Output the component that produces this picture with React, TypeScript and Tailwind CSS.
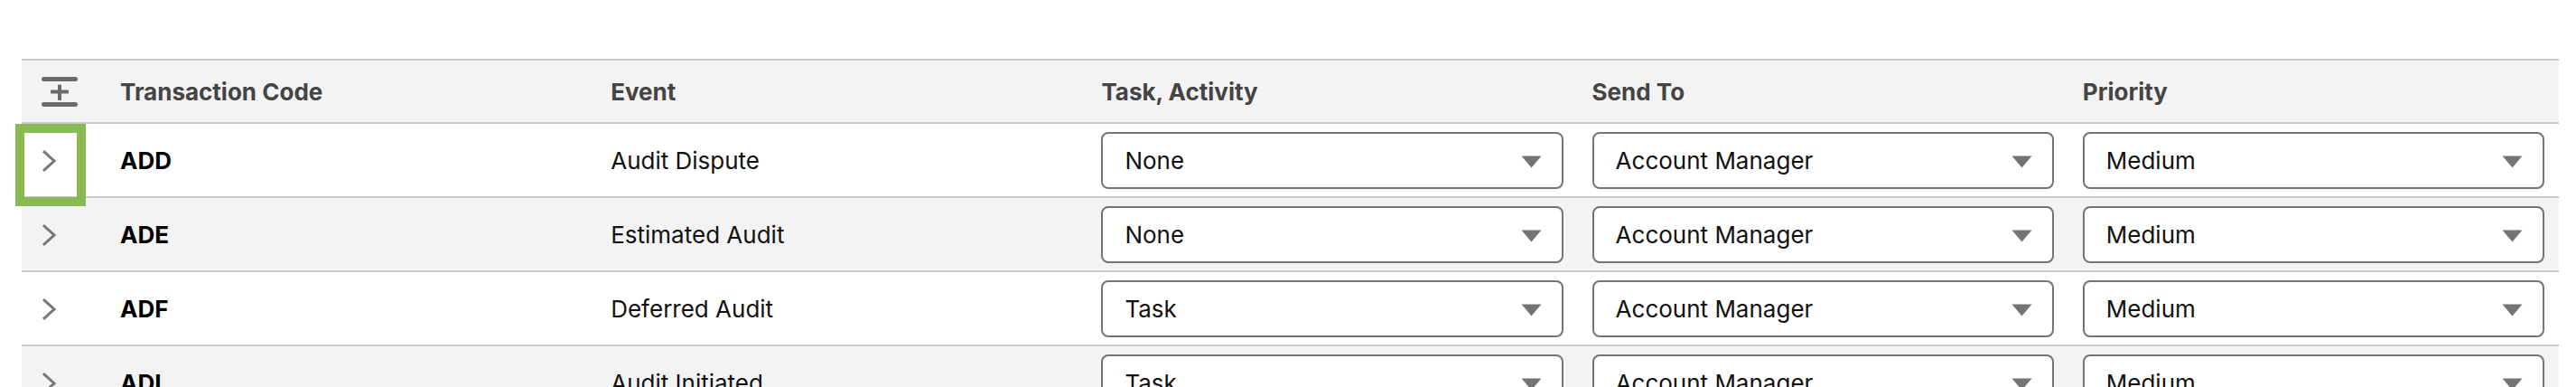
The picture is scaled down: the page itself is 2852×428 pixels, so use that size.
import React from "react";

interface Rule {
  code: string;
  event: string;
  task: string;
  sendTo: string;
  priority: string;
}

const rules: Rule[] = [
  { code: "ADD", event: "Audit Dispute", task: "None", sendTo: "Account Manager", priority: "Medium" },
  { code: "ADE", event: "Estimated Audit", task: "None", sendTo: "Account Manager", priority: "Medium" },
  { code: "ADF", event: "Deferred Audit", task: "Task", sendTo: "Account Manager", priority: "Medium" },
  { code: "ADI", event: "Audit Initiated", task: "Task", sendTo: "Account Manager", priority: "Medium" },
];

// header icon: expand all rows
function ExpandAllIcon() {
  return (
    <svg width="40" height="34" viewBox="0 0 40 34" fill="#6b6b6b">
      <rect x="0" y="0" width="40" height="5" rx="2.5" />
      <rect x="0" y="28" width="40" height="5" rx="2.5" />
      <rect x="10" y="14.5" width="20" height="4" rx="1" />
      <rect x="18" y="8.5" width="4" height="17.5" rx="1" />
    </svg>
  );
}

function Chevron() {
  return (
    <svg width="16" height="24" viewBox="0 0 16 24" fill="none">
      <polyline points="2,1.2 14,12 2,22.8" stroke="#777777" strokeWidth="3" />
    </svg>
  );
}

function Picklist({ value }: { value: string }) {
  return (
    <div className="flex items-center justify-between h-[63px] w-full bg-white border-2 border-[#747474] rounded-[8px] pl-[24px] pr-[22px]">
      <span className="text-[26px] text-[#111111]">{value}</span>
      <svg width="23" height="14" viewBox="0 0 23 14" className="mt-[3px]">
        <polygon points="0.5,0.5 22.5,0.5 11.5,13.5" fill="#747474" />
      </svg>
    </div>
  );
}

export default function App() {
  return (
    <div className="w-full h-[428px] overflow-hidden bg-white pt-[65px] pl-[24px] pr-[19px] font-[Inter,'Noto_Sans',sans-serif]">
      <div className="border-t-2 border-[#c9c9c9]">
        {/* header */}
        <div className="grid grid-cols-[93px_repeat(5,1fr)] h-[70px] bg-[#f3f3f3] border-b-2 border-[#c9c9c9] text-[26px] font-bold text-[#444444]">
          <div className="flex items-center pl-[22px] pt-[2px]">
            <ExpandAllIcon />
          </div>
          <div className="flex items-center px-[16px]">Transaction Code</div>
          <div className="flex items-center px-[16px]">Event</div>
          <div className="flex items-center px-[16px]">Task, Activity</div>
          <div className="flex items-center px-[16px]">Send To</div>
          <div className="flex items-center px-[16px]">Priority</div>
        </div>

        {rules.map((r, i) => (
          <div
            key={r.code}
            className={`grid grid-cols-[93px_repeat(5,1fr)] h-[82px] border-b-2 border-[#c9c9c9] text-[26px] text-[#111111] ${
              i % 2 === 1 ? "bg-[#f3f3f3]" : "bg-white"
            }`}
          >
            <div className="relative flex items-center pl-[22px] pt-[2px]">
              <Chevron />
              {i === 0 && (
                <div className="absolute -left-[7px] top-0 w-[78px] h-[91px] border-[10px] border-[#88ba52] z-10" />
              )}
            </div>
            <div className="flex items-center px-[16px] font-bold text-black">{r.code}</div>
            <div className="flex items-center px-[16px]">{r.event}</div>
            <div className="flex items-center px-[16px]">
              <Picklist value={r.task} />
            </div>
            <div className="flex items-center px-[16px]">
              <Picklist value={r.sendTo} />
            </div>
            <div className="flex items-center px-[16px]">
              <Picklist value={r.priority} />
            </div>
          </div>
        ))}
      </div>
    </div>
  );
}
